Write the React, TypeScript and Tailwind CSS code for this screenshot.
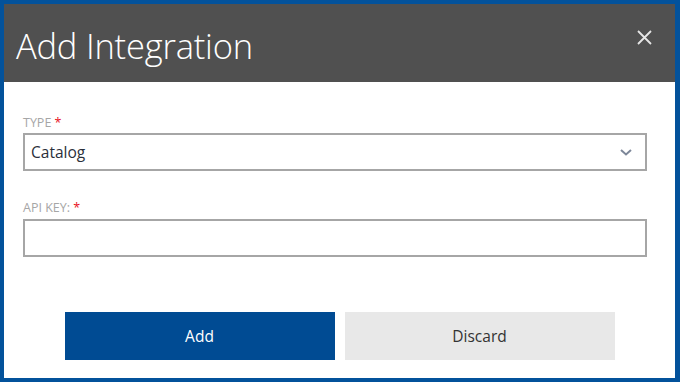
import React from "react";

export default function App() {
  return (
    <div
      className="w-[680px] h-[382px] bg-white border-[#03529b] border-t-4 border-l-4 border-b-4 border-r-[5px] flex flex-col"
      style={{ fontFamily: '"Open Sans", "Noto Sans", sans-serif' }}
    >
      <div className="h-[78px] bg-[#505050] flex items-start justify-between shrink-0">
        <h1 className="text-white text-[34.5px] font-light leading-none pl-[12px] pt-[25px] tracking-[-0.2px]">
          Add Integration
        </h1>
        <svg
          width="15"
          height="15"
          viewBox="0 0 15 15"
          className="mt-[26px] mr-[23px]"
        >
          <path d="M1 1 L14 14 M14 1 L1 14" stroke="#e6e6e6" strokeWidth="1.8" fill="none" />
        </svg>
      </div>
      <div className="pl-[19px] pr-[28px] pt-[33px] flex flex-col">
        <label className="text-[12.5px] leading-[16px] text-[#a6a6a6] uppercase">
          Type <span className="text-[#e81123]">*</span>
        </label>
        <div className="mt-[2px] h-[38px] border-2 border-[#a6a6a6] flex items-center justify-between pl-[6px] pr-[6px] pt-[1px]">
          <span className="text-[15.5px] text-[#2a2f3a]">Catalog</span>
          <svg width="12" height="7" viewBox="0 0 12 7" className="mr-[7px]">
            <path d="M1 1 L6 5.5 L11 1" stroke="#7d8799" strokeWidth="2" fill="none" />
          </svg>
        </div>
        <label className="mt-[29px] text-[12.5px] leading-[16px] text-[#a6a6a6] uppercase">
          API KEY: <span className="text-[#e81123]">*</span>
        </label>
        <div className="mt-[3px] h-[38px] border-2 border-[#a6a6a6]"></div>
        <div className="mt-[55px] mr-[-9px] flex justify-center gap-[10px]">
          <button className="w-[270px] h-[48px] pt-[2px] bg-[#004b93] text-white text-[15.5px]">
            Add
          </button>
          <button className="w-[270px] h-[48px] pt-[2px] bg-[#e8e8e8] text-[#333333] text-[15.5px]">
            Discard
          </button>
        </div>
      </div>
    </div>
  );
}
